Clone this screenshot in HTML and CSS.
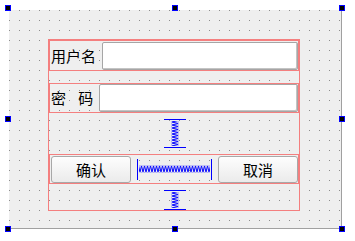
FILE: index.html
```html
<!DOCTYPE html>
<html lang="zh">
<head>
    <meta charset="UTF-8">
    <title>Login Form</title>
    <link rel="stylesheet" href="styles.css">
</head>
<body>
    <div class="form">
        <div class="layout">
            <div class="row row-first">
                <label class="label">用户名</label>
                <div class="edit"></div>
            </div>
            <div class="row row-second">
                <label class="label pwd">密 码</label>
                <div class="edit"></div>
            </div>
            <div class="vspacer">
                <svg width="22" height="29" viewBox="0 0 22 29">
                    <defs>
                        <pattern id="vcoil" width="7" height="3" patternUnits="userSpaceOnUse" x="7.5" y="0">
                            <path d="M0,0 L7,1.5 L0,3" fill="none" stroke="#0000ff" stroke-width="1"/>
                        </pattern>
                    </defs>
                    <rect x="0" y="0" width="22" height="1" fill="#0000ff"/>
                    <rect x="7.5" y="2" width="7" height="25" fill="url(#vcoil)"/>
                    <rect x="0" y="28" width="22" height="1" fill="#0000ff"/>
                </svg>
            </div>
            <div class="row">
                <button class="btn">确认</button>
                <div class="hspacer">
                    <svg width="75" height="21" viewBox="0 0 75 21">
                        <defs>
                            <pattern id="hcoil" width="3" height="7" patternUnits="userSpaceOnUse" x="0" y="6.5">
                                <path d="M0,7 L1.5,0 L3,7" fill="none" stroke="#0000ff" stroke-width="1"/>
                            </pattern>
                        </defs>
                        <rect x="0" y="0" width="1" height="21" fill="#0000ff"/>
                        <rect x="2" y="6.5" width="71" height="7" fill="url(#hcoil)"/>
                        <rect x="74" y="0" width="1" height="21" fill="#0000ff"/>
                    </svg>
                </div>
                <button class="btn">取消</button>
            </div>
            <div class="vspacer vspacer-bottom">
                <svg width="22" height="20" viewBox="0 0 22 20">
                    <rect x="0" y="0" width="22" height="1" fill="#0000ff"/>
                    <rect x="7.5" y="2" width="7" height="16" fill="url(#vcoil)"/>
                    <rect x="0" y="19" width="22" height="1" fill="#0000ff"/>
                </svg>
            </div>
        </div>
    </div>

    <!-- selection handles -->
    <div class="handle h-left h-top"></div>
    <div class="handle h-mid h-top"></div>
    <div class="handle h-right h-top"></div>
    <div class="handle h-left h-center"></div>
    <div class="handle h-right h-center"></div>
    <div class="handle h-left h-bottom"></div>
    <div class="handle h-mid h-bottom"></div>
    <div class="handle h-right h-bottom"></div>
</body>
</html>
```

FILE: styles.css
```css
body {
    margin: 0;
    background: #fff;
    font-family: "Noto Sans CJK SC", "Liberation Sans", sans-serif;
    font-size: 15px;
    color: #000;
}
.form {
    margin: 10px 0 0 9px;
    width: 333px;
    height: 219px;
    box-sizing: border-box;
    padding: 29px 0 0 39px;
    border-right: 1px solid #a0a0a0;
    border-bottom: 1px solid #a0a0a0;
    background-color: #efefef;
    background-image: conic-gradient(at 1px 1px, transparent 75%, #8e8e8e 0);
    background-size: 10px 10px;
}
.layout {
    width: 252px;
    height: 172px;
    box-sizing: border-box;
    border: 1px solid #f47f7f;
    display: flex;
    flex-direction: column;
}
.row {
    display: flex;
    align-items: flex-end;
    height: 30px;
    box-sizing: border-box;
    border: 1px solid #f47f7f;
    padding-left: 1px;
    flex-shrink: 0;
}
.row-first {
    height: 31px;
}
.row-second {
    margin-top: 12px;
}
.label {
    align-self: center;
    line-height: 18px;
    white-space: pre;
}
.pwd {
    word-spacing: 9px;
}
.edit {
    flex: 1;
    height: 28px;
    margin-left: 6px;
    box-sizing: border-box;
    background: #fff;
    border: 1px solid #a6a6a6;
    border-radius: 2px;
    box-shadow: inset -1px -1px 0 #c4c4c4;
}
.btn {
    width: 80px;
    height: 27px;
    margin: 0;
    padding: 0;
    box-sizing: border-box;
    border: 1px solid #a8a8a8;
    border-radius: 3px;
    background: linear-gradient(#fdfdfd, #ebebeb);
    font-family: inherit;
    font-size: 15px;
    color: #000;
}
.hspacer {
    align-self: center;
    width: 75px;
    height: 21px;
    margin: 0 6px;
}
.hspacer svg, .vspacer svg {
    display: block;
}
.vspacer {
    height: 41px;
    display: flex;
    align-items: center;
    justify-content: center;
    padding-left: 2px;
    flex-shrink: 0;
}
.vspacer-bottom {
    height: 26px;
    align-items: flex-end;
}
.handle {
    position: absolute;
    width: 4px;
    height: 4px;
    background: #000;
    border: 1px solid #0000ff;
}
.h-left { left: 5px; }
.h-mid { left: 172px; }
.h-right { left: 339px; }
.h-top { top: 5px; }
.h-center { top: 116px; }
.h-bottom { top: 226px; }
```
